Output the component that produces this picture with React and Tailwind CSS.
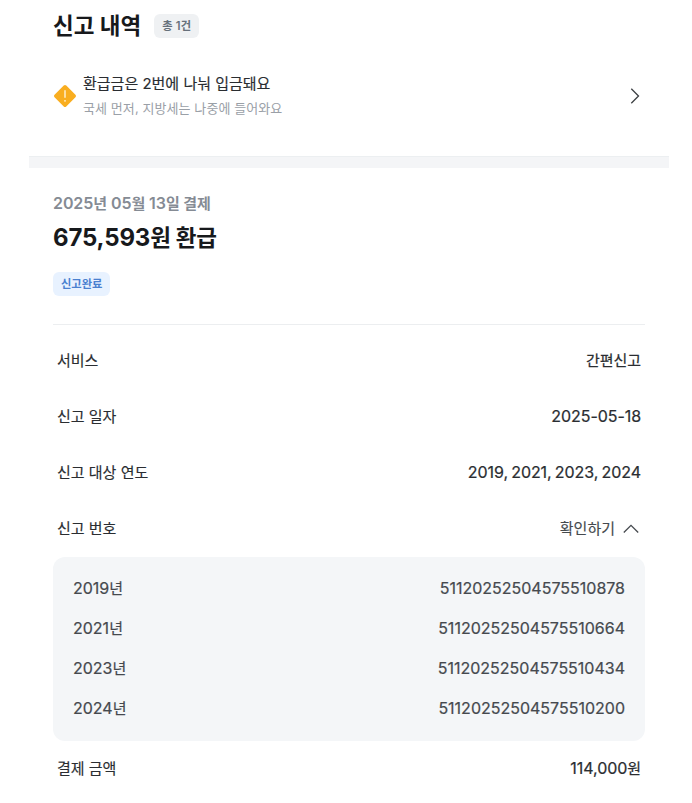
const reports = [
  { year: '2019', number: '51120252504575510878' },
  { year: '2021', number: '51120252504575510664' },
  { year: '2023', number: '51120252504575510434' },
  { year: '2024', number: '51120252504575510200' },
];

function WarningIcon() {
  return (
    <svg width="24" height="24" viewBox="0 0 24 24" className="shrink-0">
      <rect x="3.7" y="3.7" width="16.6" height="16.6" rx="1.8" fill="#f9ae20" transform="rotate(45 12 12)" />
      <path d="M12 6.8v6.4" stroke="#fff3da" strokeWidth="1.4" strokeLinecap="round" />
      <circle cx="12" cy="16.8" r="0.9" fill="#fff3da" />
    </svg>
  );
}

// Hangul runs slightly smaller than the digits beside it
function Ko({ children }) {
  return <span className="text-[0.9375em]">{children}</span>;
}

function Row({ label, children }) {
  return (
    <div className="flex h-14 items-center justify-between px-1">
      <span className="[-webkit-text-stroke:0.15px]"><Ko>{label}</Ko></span>
      {children}
    </div>
  );
}

function Value({ children }) {
  return <span className="tracking-[-0.06px] [word-spacing:-1.2px] [-webkit-text-stroke:0.22px]">{children}</span>;
}

export default function App() {
  return (
    <div className="h-[803px] overflow-hidden bg-white pr-[23px] pl-[29px] font-['Inter','Noto_Sans_CJK_KR',sans-serif] text-base leading-6 text-[#2a2d31]">
      <main className="w-[640px]">
        <header className="flex items-center gap-[13px] px-6 pt-2.5">
          <h1 className="text-[22.5px] leading-8 font-bold text-[#17191c]">신고 내역</h1>
          <span className="flex h-6 items-center rounded-md bg-[#eff1f3] px-2 text-[11.25px] font-semibold tracking-[0.25px] text-[#66707b]">
            총 1건
          </span>
        </header>

        {/* Refund notice */}
        <button className="mt-[29px] flex w-full items-center px-6 text-left">
          <WarningIcon />
          <span className="ml-1.5 flex-1">
            <span className="block leading-6 [-webkit-text-stroke:0.15px]"><Ko>환급금은 2번에 나눠 입금돼요</Ko></span>
            <span className="block text-[13px] leading-6 tracking-[0.08px] text-[#9aa0a7]">국세 먼저, 지방세는 나중에 들어와요</span>
          </span>
          <svg width="20" height="20" viewBox="0 0 20 20" fill="none" stroke="#3c3f43" strokeWidth="1.3">
            <path d="M6.3 2.8l7.2 7.2-7.2 7.2" />
          </svg>
        </button>

        <div className="mt-9 h-3 border-t border-[#eceff1] bg-[#f4f5f7]" />

        <section className="px-6 pt-[23px]">
          <p className="font-semibold tracking-[-0.08px] text-[#858b94]">
            2025<Ko>년</Ko> 05<Ko>월</Ko> 13<Ko>일 결제</Ko>
          </p>
          <h2 className="mt-1.5 text-2xl leading-8 font-bold tracking-[-0.18px] text-[#17191c]">
            675,593<Ko>원 환급</Ko>
          </h2>
          <span className="mt-4.5 inline-flex h-6 items-center rounded-md bg-[#e8f2ff] px-2 align-top text-[11.25px] font-semibold text-[#4a80d0]">
            신고완료
          </span>

          <div className="mt-7 border-t border-[#eceef0] pt-[7px]">
            <Row label="서비스">
              <Value><Ko>간편신고</Ko></Value>
            </Row>
            <Row label="신고 일자">
              <Value>2025-05-18</Value>
            </Row>
            <Row label="신고 대상 연도">
              <Value>2019, 2021, 2023, 2024</Value>
            </Row>
            <Row label="신고 번호">
              <button className="flex items-center gap-1.5 text-[#45494e]">
                <span className="[-webkit-text-stroke:0.15px]"><Ko>확인하기</Ko></span>
                <svg width="20" height="20" viewBox="0 0 20 20" fill="none" stroke="#45494e" strokeWidth="1.3">
                  <path d="M2.8 14.5L10 7.3l7.2 7.2" />
                </svg>
              </button>
            </Row>
            <ul className="mt-px -mb-px rounded-xl bg-[#f4f6f8] px-5 pt-[11px] pb-[13px] text-[#45494e] [-webkit-text-stroke:0.2px]">
              {reports.map((report) => (
                <li key={report.year} className="flex h-10 items-center justify-between">
                  <span>{report.year}<Ko>년</Ko></span>
                  <span>{report.number}</span>
                </li>
              ))}
            </ul>
            <Row label="결제 금액">
              <Value>114,000<Ko>원</Ko></Value>
            </Row>
          </div>
        </section>
      </main>
    </div>
  );
}
